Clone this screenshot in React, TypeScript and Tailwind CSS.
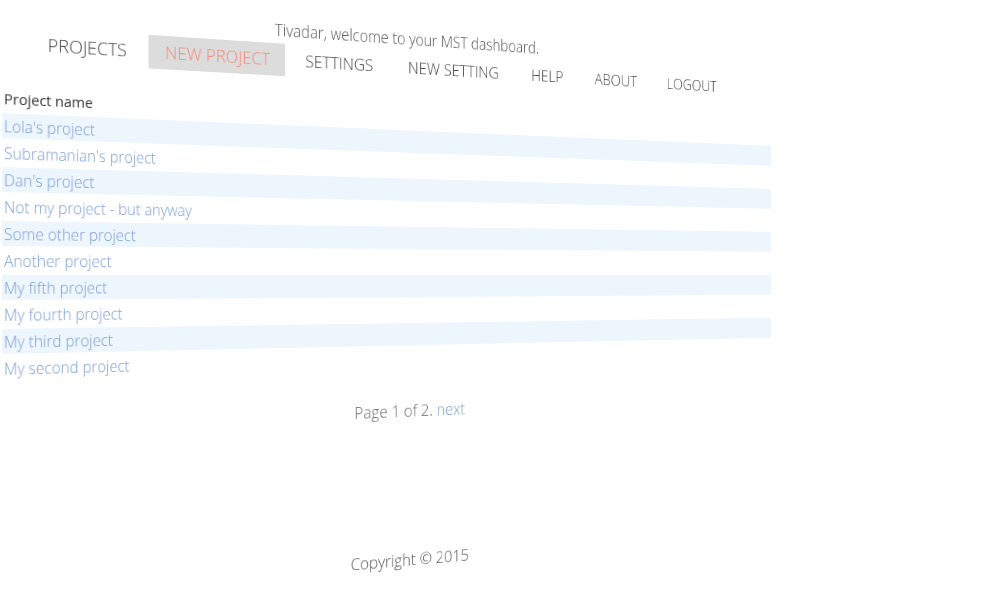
import React from 'react';

const navItems = [
  { label: 'Projects' },
  { label: 'New project', active: true },
  { label: 'Settings' },
  { label: 'New setting' },
  { label: 'Help' },
  { label: 'About' },
  { label: 'Logout' },
];

const projects = [
  "Lola's project",
  "Subramanian's project",
  "Dan's project",
  'Not my project - but anyway',
  'Some other project',
  'Another project',
  'My fifth project',
  'My fourth project',
  'My third project',
  'My second project',
];

export default function App() {
  return (
    <div className="w-[986px] h-[612px] overflow-hidden bg-white font-['Open_Sans',sans-serif] font-light text-[#555]">
      {/* whole page sits in a tilted plane */}
      <div className="[transform:perspective(665px)_rotateY(10deg)] origin-[0_274px]">
        <header>
          <p className="ml-[301px] h-[25px] text-[18px] leading-[21px] text-[#555]">
            Tivadar, welcome to your MST dashboard.
          </p>
          <nav className="ml-[29px] flex h-[35px] items-center gap-[4px]">
            {navItems.map(item => (
              <a
                key={item.label}
                href="#"
                className={
                  item.active
                    ? 'flex h-[35px] items-center px-[18px] text-[19px] uppercase bg-[#dcdcdc] text-[#f4897b]'
                    : 'flex h-[35px] items-center px-[20px] text-[19px] uppercase text-[#444]'
                }
              >
                {item.label}
              </a>
            ))}
          </nav>
        </header>

        <main className="mt-[24px] flex flex-col gap-[2px] px-[2px] pt-[2px]">
          <div className="flex h-[25px] items-center px-[2px] text-[15px] font-normal text-[#333]">Project name</div>
          {projects.map((name, i) => (
            <div
              key={name}
              className={
                i % 2 === 0
                  ? 'flex h-[25px] items-center px-[2px] text-[16px] bg-[#edf5fd]'
                  : 'flex h-[25px] items-center px-[2px] text-[16px]'
              }
            >
              <a href="#" className="text-[#7b9dd5]">{name}</a>
            </div>
          ))}
        </main>

        <div className="mt-[34px] w-[936px] text-center text-[19px] leading-[24px] text-[#666]">
          Page 1 of 2. <a href="#" className="text-[#7b9dd5]">next</a>
        </div>

        <footer className="mt-[143px] w-[936px] text-center text-[19px] leading-[24px] text-[#555]">
          Copyright © 2015
        </footer>
      </div>
    </div>
  );
}
